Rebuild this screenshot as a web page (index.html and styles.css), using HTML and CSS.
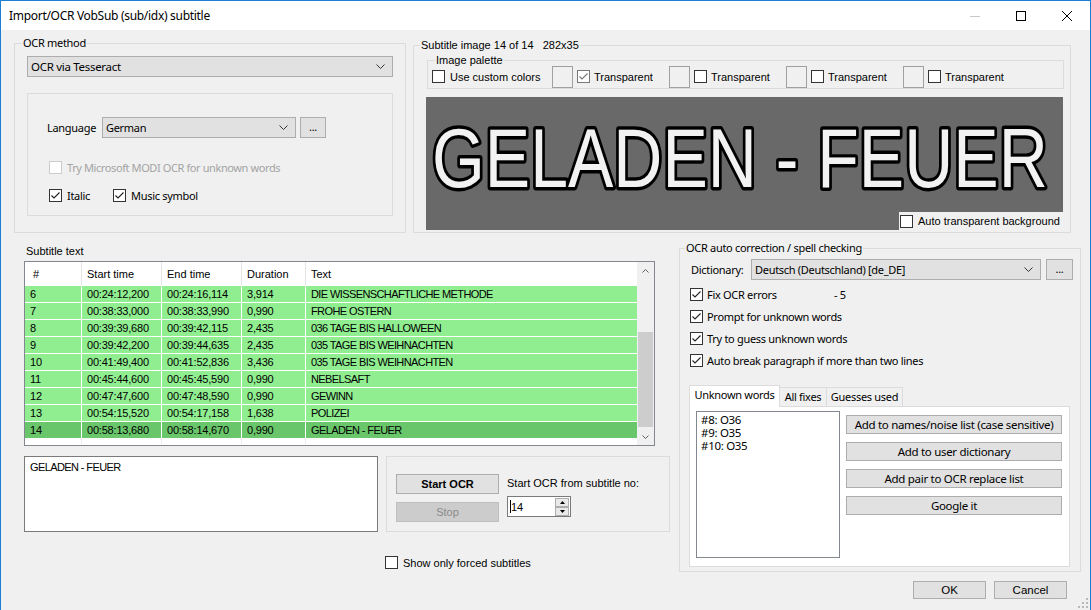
FILE: index.html
```html
<!DOCTYPE html>
<html lang="en">
<head>
    <meta charset="UTF-8">
    <title>Import/OCR VobSub (sub/idx) subtitle</title>
    <link rel="stylesheet" href="styles.css">
</head>
<body>
<div class="window">
    <div class="titlebar">
        <span class="title">Import/OCR VobSub (sub/idx) subtitle</span>
        <span class="caption-btn"><svg width="10" height="10" viewBox="0 0 10 10"><path d="M0 5.5H10" stroke="#c8c8c8"/></svg></span>
        <span class="caption-btn"><svg width="10" height="10" viewBox="0 0 10 10"><rect x="0.5" y="0.5" width="9" height="9" fill="none" stroke="#000"/></svg></span>
        <span class="caption-btn"><svg width="10" height="10" viewBox="0 0 10 10"><path d="M0 0L10 10M10 0L0 10" stroke="#000"/></svg></span>
    </div>

    <div class="client">
        <div class="top-row">
            <!-- OCR method -->
            <div class="group ocr-method">
                <span class="group-title">OCR method</span>
                <div class="combo combo-method">OCR via Tesseract <svg class="chev" width="9" height="5" viewBox="0 0 9 5"><path d="M0.5 0.5L4.5 4.5L8.5 0.5" fill="none" stroke="#333"/></svg></div>
                <div class="tess-panel">
                    <div class="lang-row">
                        <span class="lang-label">Language</span>
                        <div class="combo combo-lang">German <svg class="chev" width="9" height="5" viewBox="0 0 9 5"><path d="M0.5 0.5L4.5 4.5L8.5 0.5" fill="none" stroke="#333"/></svg></div>
                        <div class="btn btn-dots">...</div>
                    </div>
                    <div class="check-row modi disabled"><span class="cb"></span>Try Microsoft MODI OCR for unknown words</div>
                    <div class="check-row style-row">
                        <span class="check-item italic"><span class="cb"><svg width="11" height="11" viewBox="0 0 11 11"><path d="M1.5 5.5L4 8L9.5 2.5" fill="none" stroke="#222" stroke-width="1.1"/></svg></span>Italic</span>
                        <span class="check-item"><span class="cb"><svg width="11" height="11" viewBox="0 0 11 11"><path d="M1.5 5.5L4 8L9.5 2.5" fill="none" stroke="#222" stroke-width="1.1"/></svg></span>Music symbol</span>
                    </div>
                </div>
            </div>

            <!-- Subtitle image -->
            <div class="group subtitle-image">
                <span class="group-title sans img-title">Subtitle image 14 of 14&nbsp;&nbsp;&nbsp;282x35</span>
                <div class="group palette sans">
                    <span class="group-title">Image palette</span>
                    <span class="check-item custom-colors"><span class="cb"></span>Use custom colors</span>
                    <span class="swatch-item"><span class="swatch"></span><span class="cb cb-gray"><svg width="11" height="11" viewBox="0 0 11 11"><path d="M1.5 5.5L4 8L9.5 2.5" fill="none" stroke="#777" stroke-width="1.1"/></svg></span>Transparent</span>
                    <span class="swatch-item"><span class="swatch"></span><span class="cb"></span>Transparent</span>
                    <span class="swatch-item"><span class="swatch"></span><span class="cb"></span>Transparent</span>
                    <span class="swatch-item"><span class="swatch"></span><span class="cb"></span>Transparent</span>
                </div>
                <div class="preview">
                    <svg class="ocr-image" width="637" height="133" viewBox="0 0 637 133">
                        <text x="6" y="72.9" transform="scale(1 1.235)">GELADEN - FEUER</text>
                    </svg>
                    <div class="auto-bg sans"><span class="cb"></span>Auto transparent background</div>
                </div>
            </div>
        </div>

        <div class="bottom-row">
            <div class="left-col">
                <div class="caption sans">Subtitle text</div>
                <div class="listview sans">
                    <div class="lv-body">
                        <div class="lv-row lv-head">
                            <div class="cell first">#</div><div class="cell">Start time</div><div class="cell">End time</div><div class="cell">Duration</div><div class="cell">Text</div>
                        </div>
                        <div class="lv-row"><div class="cell">6</div><div class="cell">00:24:12,200</div><div class="cell">00:24:16,114</div><div class="cell">3,914</div><div class="cell">DIE WISSENSCHAFTLICHE METHODE</div></div>
                        <div class="lv-row"><div class="cell">7</div><div class="cell">00:38:33,000</div><div class="cell">00:38:33,990</div><div class="cell">0,990</div><div class="cell">FROHE OSTERN</div></div>
                        <div class="lv-row"><div class="cell">8</div><div class="cell">00:39:39,680</div><div class="cell">00:39:42,115</div><div class="cell">2,435</div><div class="cell">036 TAGE BIS HALLOWEEN</div></div>
                        <div class="lv-row"><div class="cell">9</div><div class="cell">00:39:42,200</div><div class="cell">00:39:44,635</div><div class="cell">2,435</div><div class="cell">035 TAGE BIS WEIHNACHTEN</div></div>
                        <div class="lv-row"><div class="cell">10</div><div class="cell">00:41:49,400</div><div class="cell">00:41:52,836</div><div class="cell">3,436</div><div class="cell">035 TAGE BIS WEIHNACHTEN</div></div>
                        <div class="lv-row"><div class="cell">11</div><div class="cell">00:45:44,600</div><div class="cell">00:45:45,590</div><div class="cell">0,990</div><div class="cell">NEBELSAFT</div></div>
                        <div class="lv-row"><div class="cell">12</div><div class="cell">00:47:47,600</div><div class="cell">00:47:48,590</div><div class="cell">0,990</div><div class="cell">GEWINN</div></div>
                        <div class="lv-row"><div class="cell">13</div><div class="cell">00:54:15,520</div><div class="cell">00:54:17,158</div><div class="cell">1,638</div><div class="cell">POLIZEI</div></div>
                        <div class="lv-row selected"><div class="cell">14</div><div class="cell">00:58:13,680</div><div class="cell">00:58:14,670</div><div class="cell">0,990</div><div class="cell">GELADEN - FEUER</div></div>
                        <div class="lv-row lv-fill"><div class="cell"></div><div class="cell"></div><div class="cell"></div><div class="cell"></div><div class="cell"></div></div>
                    </div>
                    <div class="vscroll">
                        <div class="arrow"><svg width="7" height="4" viewBox="0 0 7 4"><path d="M0.5 3.5L3.5 0.5L6.5 3.5" fill="none" stroke="#606060"/></svg></div>
                        <div class="track"><div class="thumb"></div></div>
                        <div class="arrow"><svg width="7" height="4" viewBox="0 0 7 4"><path d="M0.5 0.5L3.5 3.5L6.5 0.5" fill="none" stroke="#606060"/></svg></div>
                    </div>
                </div>

                <div class="ocr-row sans">
                    <div class="textbox">GELADEN - FEUER</div>
                    <div class="ocr-panel">
                        <div class="ocr-buttons">
                            <div class="btn btn-start">Start OCR</div>
                            <div class="btn btn-stop">Stop</div>
                        </div>
                        <div class="from-col">
                            <div class="from-label">Start OCR from subtitle no:</div>
                            <div class="spin">
                                <span class="spin-value"><span class="caret"></span>14</span>
                                <span class="spin-btns">
                                    <span class="spin-btn"><svg width="5" height="3" viewBox="0 0 5 3"><path d="M0 3L2.5 0L5 3Z" fill="#000"/></svg></span>
                                    <span class="spin-btn"><svg width="5" height="3" viewBox="0 0 5 3"><path d="M0 0L2.5 3L5 0Z" fill="#000"/></svg></span>
                                </span>
                            </div>
                        </div>
                    </div>
                </div>

                <div class="check-row forced sans"><span class="cb"></span>Show only forced subtitles</div>
            </div>

            <div class="right-col">
                <div class="group spell">
                    <span class="group-title spell-title">OCR auto correction / spell checking</span>
                    <div class="dict-row">
                        <span class="dict-label">Dictionary:</span>
                        <div class="combo combo-dict">Deutsch (Deutschland) [de_DE] <svg class="chev" width="9" height="5" viewBox="0 0 9 5"><path d="M0.5 0.5L4.5 4.5L8.5 0.5" fill="none" stroke="#333"/></svg></div>
                        <div class="btn btn-dots dict-dots">...</div>
                    </div>
                    <div class="check-row spell-check first-check"><span class="cb"><svg width="11" height="11" viewBox="0 0 11 11"><path d="M1.5 5.5L4 8L9.5 2.5" fill="none" stroke="#222" stroke-width="1.1"/></svg></span><span class="fix-label">Fix OCR errors</span>- 5</div>
                    <div class="check-row spell-check"><span class="cb"><svg width="11" height="11" viewBox="0 0 11 11"><path d="M1.5 5.5L4 8L9.5 2.5" fill="none" stroke="#222" stroke-width="1.1"/></svg></span>Prompt for unknown words</div>
                    <div class="check-row spell-check"><span class="cb"><svg width="11" height="11" viewBox="0 0 11 11"><path d="M1.5 5.5L4 8L9.5 2.5" fill="none" stroke="#222" stroke-width="1.1"/></svg></span>Try to guess unknown words</div>
                    <div class="check-row spell-check"><span class="cb"><svg width="11" height="11" viewBox="0 0 11 11"><path d="M1.5 5.5L4 8L9.5 2.5" fill="none" stroke="#222" stroke-width="1.1"/></svg></span>Auto break paragraph if more than two lines</div>

                    <div class="tabs">
                        <div class="tab active tab-unknown">Unknown words</div>
                        <div class="tab tab-fixes">All fixes</div>
                        <div class="tab tab-guesses">Guesses used</div>
                    </div>
                    <div class="tabpage">
                        <div class="unknown-list">
                            <div>#8: O36</div>
                            <div>#9: O35</div>
                            <div>#10: O35</div>
                        </div>
                        <div class="fix-buttons">
                            <div class="btn btn-fix">Add to names/noise list (case sensitive)</div>
                            <div class="btn btn-fix">Add to user dictionary</div>
                            <div class="btn btn-fix">Add pair to OCR replace list</div>
                            <div class="btn btn-fix">Google it</div>
                        </div>
                    </div>
                </div>
                <div class="dialog-buttons sans">
                    <div class="btn btn-dialog">OK</div>
                    <div class="btn btn-dialog">Cancel</div>
                </div>
            </div>
        </div>
    </div>

    <svg class="grip" width="10" height="10" viewBox="0 0 10 10">
        <rect x="8" y="0" width="2" height="2" fill="#b8b8b8"/>
        <rect x="4" y="4" width="2" height="2" fill="#b8b8b8"/>
        <rect x="8" y="4" width="2" height="2" fill="#b8b8b8"/>
        <rect x="0" y="8" width="2" height="2" fill="#b8b8b8"/>
        <rect x="4" y="8" width="2" height="2" fill="#b8b8b8"/>
        <rect x="8" y="8" width="2" height="2" fill="#b8b8b8"/>
    </svg>
</div>
</body>
</html>
```

FILE: styles.css
```css
* {
    margin: 0;
    padding: 0;
    box-sizing: border-box;
}

body {
    background: #fff;
    font-family: "Noto Sans", sans-serif;
    font-size: 11px;
    letter-spacing: -0.3px;
    color: #000;
}

.sans {
    font-family: "Liberation Sans", Arial, sans-serif;
    letter-spacing: 0;
}

.window {
    position: relative;
    width: 1091px;
    height: 610px;
    border: 1px solid #1a7fd4;
    border-bottom: 0;
    background: #f0f0f0;
    overflow: hidden;
}

.titlebar {
    height: 29px;
    background: #fff;
    display: flex;
    align-items: center;
}

.title {
    flex: 1;
    padding-left: 8px;
    font-size: 12px;
    line-height: 29px;
}

.caption-btn {
    width: 46px;
    height: 29px;
    display: flex;
    align-items: center;
    justify-content: center;
}

.client {
    padding: 13px 0 0 13px;
}

/* group boxes */
.group {
    position: relative;
    border: 1px solid #dcdcdc;
}

.group-title {
    position: absolute;
    top: -8px;
    left: 7px;
    padding: 0 1px;
    background: #f0f0f0;
    line-height: 14px;
    white-space: nowrap;
}

.top-row {
    display: flex;
    align-items: flex-start;
}

.ocr-method {
    width: 392px;
    height: 190px;
    padding: 12px 0 0 12px;
}

.combo {
    height: 21px;
    border: 1px solid #adadad;
    background: #e1e1e1;
    display: flex;
    align-items: center;
    justify-content: space-between;
    padding: 0 7px 0 3px;
    white-space: nowrap;
}

.combo-method {
    width: 366px;
    font-size: 11.5px;
}

.tess-panel {
    margin-top: 16px;
    width: 366px;
    height: 123px;
    border: 1px solid #dcdcdc;
    padding: 23px 0 0 19px;
}

.lang-row {
    display: flex;
    align-items: center;
    height: 21px;
}

.lang-label {
    width: 55px;
}

.combo-lang {
    width: 194px;
}

.btn {
    border: 1px solid #adadad;
    background: #e1e1e1;
    display: flex;
    align-items: center;
    justify-content: center;
    white-space: nowrap;
}

.btn-dots {
    width: 26px;
    height: 21px;
    margin-left: 4px;
    padding-bottom: 2px;
}

.check-row {
    display: flex;
    align-items: center;
    height: 13px;
    white-space: nowrap;
}

.check-item {
    display: flex;
    align-items: center;
    white-space: nowrap;
}

.cb {
    width: 13px;
    height: 13px;
    flex: none;
    border: 1px solid #333;
    background: #fff;
    margin-right: 5px;
    display: flex;
    align-items: center;
    justify-content: center;
}

.cb-gray {
    border-color: #777;
}

.modi {
    margin: 23px 0 0 2px;
    letter-spacing: -0.4px;
}

.disabled {
    color: #a3a3a3;
}

.disabled .cb {
    border-color: #cccccc;
}

.style-row {
    margin: 15px 0 0 2px;
}

.italic {
    width: 64px;
}

/* subtitle image */
.subtitle-image {
    width: 658px;
    height: 188px;
    margin: 2px 0 0 7px;
    padding: 14px 0 0 12px;
}

.img-title {
    left: 6px;
}

.palette {
    width: 637px;
    height: 29px;
    margin-left: 1px;
    padding: 4px 0 0 4px;
    display: flex;
    align-items: center;
}

.custom-colors {
    width: 120px;
}

.swatch-item {
    width: 117px;
    display: flex;
    align-items: center;
    white-space: nowrap;
}

.swatch {
    width: 21px;
    height: 22px;
    border: 1px solid #a0a0a0;
    margin-right: 4px;
}

.swatch-item .cb {
    margin-right: 4px;
}

.preview {
    position: relative;
    margin-top: 8px;
    width: 637px;
    height: 133px;
    background: #696969;
    overflow: hidden;
}

.ocr-image {
    display: block;
}

.ocr-image text {
    font-family: "Liberation Sans", Arial, sans-serif;
    font-size: 68px;
    letter-spacing: 0;
    fill: #f2f2f2;
    stroke: #000;
    stroke-width: 5.5px;
    stroke-linejoin: round;
    paint-order: stroke;
}

.auto-bg {
    position: absolute;
    right: 0;
    bottom: 0;
    width: 164px;
    height: 18px;
    padding-left: 1px;
    background: #f0f0f0;
    display: flex;
    align-items: center;
    white-space: nowrap;
}

/* bottom area */
.bottom-row {
    display: flex;
    align-items: flex-start;
}

.left-col {
    width: 647px;
    margin-left: 10px;
}

.caption {
    margin: 11px 0 3px 2px;
    line-height: 14px;
}

.listview {
    width: 631px;
    height: 185px;
    border: 1px solid #828790;
    background: #fff;
    display: flex;
}

.lv-body {
    width: 612px;
}

.lv-row {
    display: grid;
    grid-template-columns: 56px 79px 79px 63px 1fr;
    column-gap: 1px;
    height: 16px;
    margin-bottom: 1px;
    background: #fff;
}

.lv-row .cell {
    background: #90ee90;
    padding-left: 5px;
    line-height: 16px;
    white-space: nowrap;
    overflow: hidden;
    letter-spacing: -0.2px;
}

.lv-row .cell:last-child {
    letter-spacing: -0.6px;
}

.lv-row.selected .cell {
    background: #6ac66a;
}

.lv-head {
    height: 24px;
    margin-bottom: 0;
    background: #e5e5e5;
}

.lv-head .cell,
.lv-head .cell:last-child {
    background: #fff;
    line-height: 24px;
    letter-spacing: 0;
}

.lv-head .first {
    padding-left: 8px;
}

.lv-fill {
    height: 5px;
    background: #ececec;
}

.lv-fill .cell {
    background: #fff;
}

.vscroll {
    width: 17px;
    background: #f0f0f0;
    display: flex;
    flex-direction: column;
}

.arrow {
    height: 17px;
    display: flex;
    align-items: center;
    justify-content: center;
}

.track {
    flex: 1;
}

.thumb {
    margin: 53px 1px 0;
    height: 95px;
    background: #cdcdcd;
}

.ocr-row {
    display: flex;
    margin-top: 10px;
}

.textbox {
    width: 354px;
    height: 76px;
    border: 1px solid #7a7a7a;
    background: #fff;
    padding: 3px 5px;
    line-height: 14px;
    letter-spacing: -0.6px;
}

.ocr-panel {
    width: 284px;
    height: 76px;
    margin-left: 8px;
    border: 1px solid #dcdcdc;
    padding: 17px 0 0 9px;
    display: flex;
}

.ocr-buttons {
    display: flex;
    flex-direction: column;
    gap: 8px;
}

.btn-start,
.btn-stop {
    width: 103px;
    height: 20px;
}

.btn-start {
    font-weight: bold;
}

.btn-stop {
    background: #cccccc;
    border-color: #bfbfbf;
    color: #8a8a8a;
}

.from-col {
    margin-left: 8px;
}

.from-label {
    margin-top: 2px;
    line-height: 14px;
    white-space: nowrap;
}

.spin {
    margin-top: 6px;
    width: 64px;
    height: 21px;
    border: 1px solid #7a7a7a;
    background: #fff;
    display: flex;
    align-items: center;
    justify-content: space-between;
    padding: 0 1px 0 2px;
}

.spin-value {
    display: flex;
    align-items: center;
}

.caret {
    width: 1px;
    height: 13px;
    background: #000;
}

.spin-btns {
    display: flex;
    flex-direction: column;
}

.spin-btn {
    width: 14px;
    height: 9px;
    border: 1px solid #adadad;
    background: #e9e9e9;
    display: flex;
    align-items: center;
    justify-content: center;
}

.forced {
    margin: 24px 0 0 361px;
}

/* spell checking */
.right-col {
    width: 402px;
    margin-left: 8px;
}

.spell {
    margin-top: 15px;
    height: 324px;
    padding: 10px 0 0 10px;
}

.spell-title {
    left: 5px;
}

.dict-row {
    display: flex;
    align-items: center;
    height: 21px;
}

.dict-label {
    width: 61px;
    padding-left: 1px;
}

.combo-dict {
    width: 290px;
}

.dict-dots {
    width: 27px;
    margin-left: 5px;
}

.spell-check {
    margin-top: 9px;
}

.first-check {
    margin-top: 8px;
}

.spell-check .cb {
    margin-right: 4px;
}

.fix-label {
    width: 127px;
}

.tabs {
    position: relative;
    z-index: 1;
    display: flex;
    align-items: flex-end;
    height: 21px;
    margin: 18px 0 0 -1px;
}

.tab {
    height: 19px;
    border: 1px solid #dcdcdc;
    border-bottom: 0;
    background: #f0f0f0;
    text-align: center;
    line-height: 18px;
    white-space: nowrap;
}

.tab.active {
    height: 22px;
    margin-bottom: -1px;
    background: #fff;
    line-height: 18px;
}

.tab-unknown {
    width: 91px;
}

.tab-fixes {
    width: 48px;
    margin-left: -1px;
}

.tab-guesses {
    width: 77px;
    margin-left: -1px;
}

.tabpage {
    width: 381px;
    height: 161px;
    margin-left: -1px;
    border: 1px solid #dcdcdc;
    background: #fff;
    padding: 4px 0 0 6px;
    display: flex;
    align-items: flex-start;
}

.unknown-list {
    width: 144px;
    height: 147px;
    border: 1px solid #828790;
    padding: 1px 4px;
    line-height: 13px;
    font-size: 11.5px;
}

.fix-buttons {
    margin: 4px 0 0 6px;
    display: flex;
    flex-direction: column;
    gap: 8px;
}

.btn-fix {
    width: 216px;
    height: 19px;
    font-size: 11.5px;
}

.dialog-buttons {
    display: flex;
    justify-content: flex-end;
    gap: 8px;
    margin: 9px 14px 0 0;
}

.btn-dialog {
    width: 73px;
    height: 18px;
    font-size: 11.5px;
}

.grip {
    position: absolute;
    right: 2px;
    bottom: 2px;
}
```
